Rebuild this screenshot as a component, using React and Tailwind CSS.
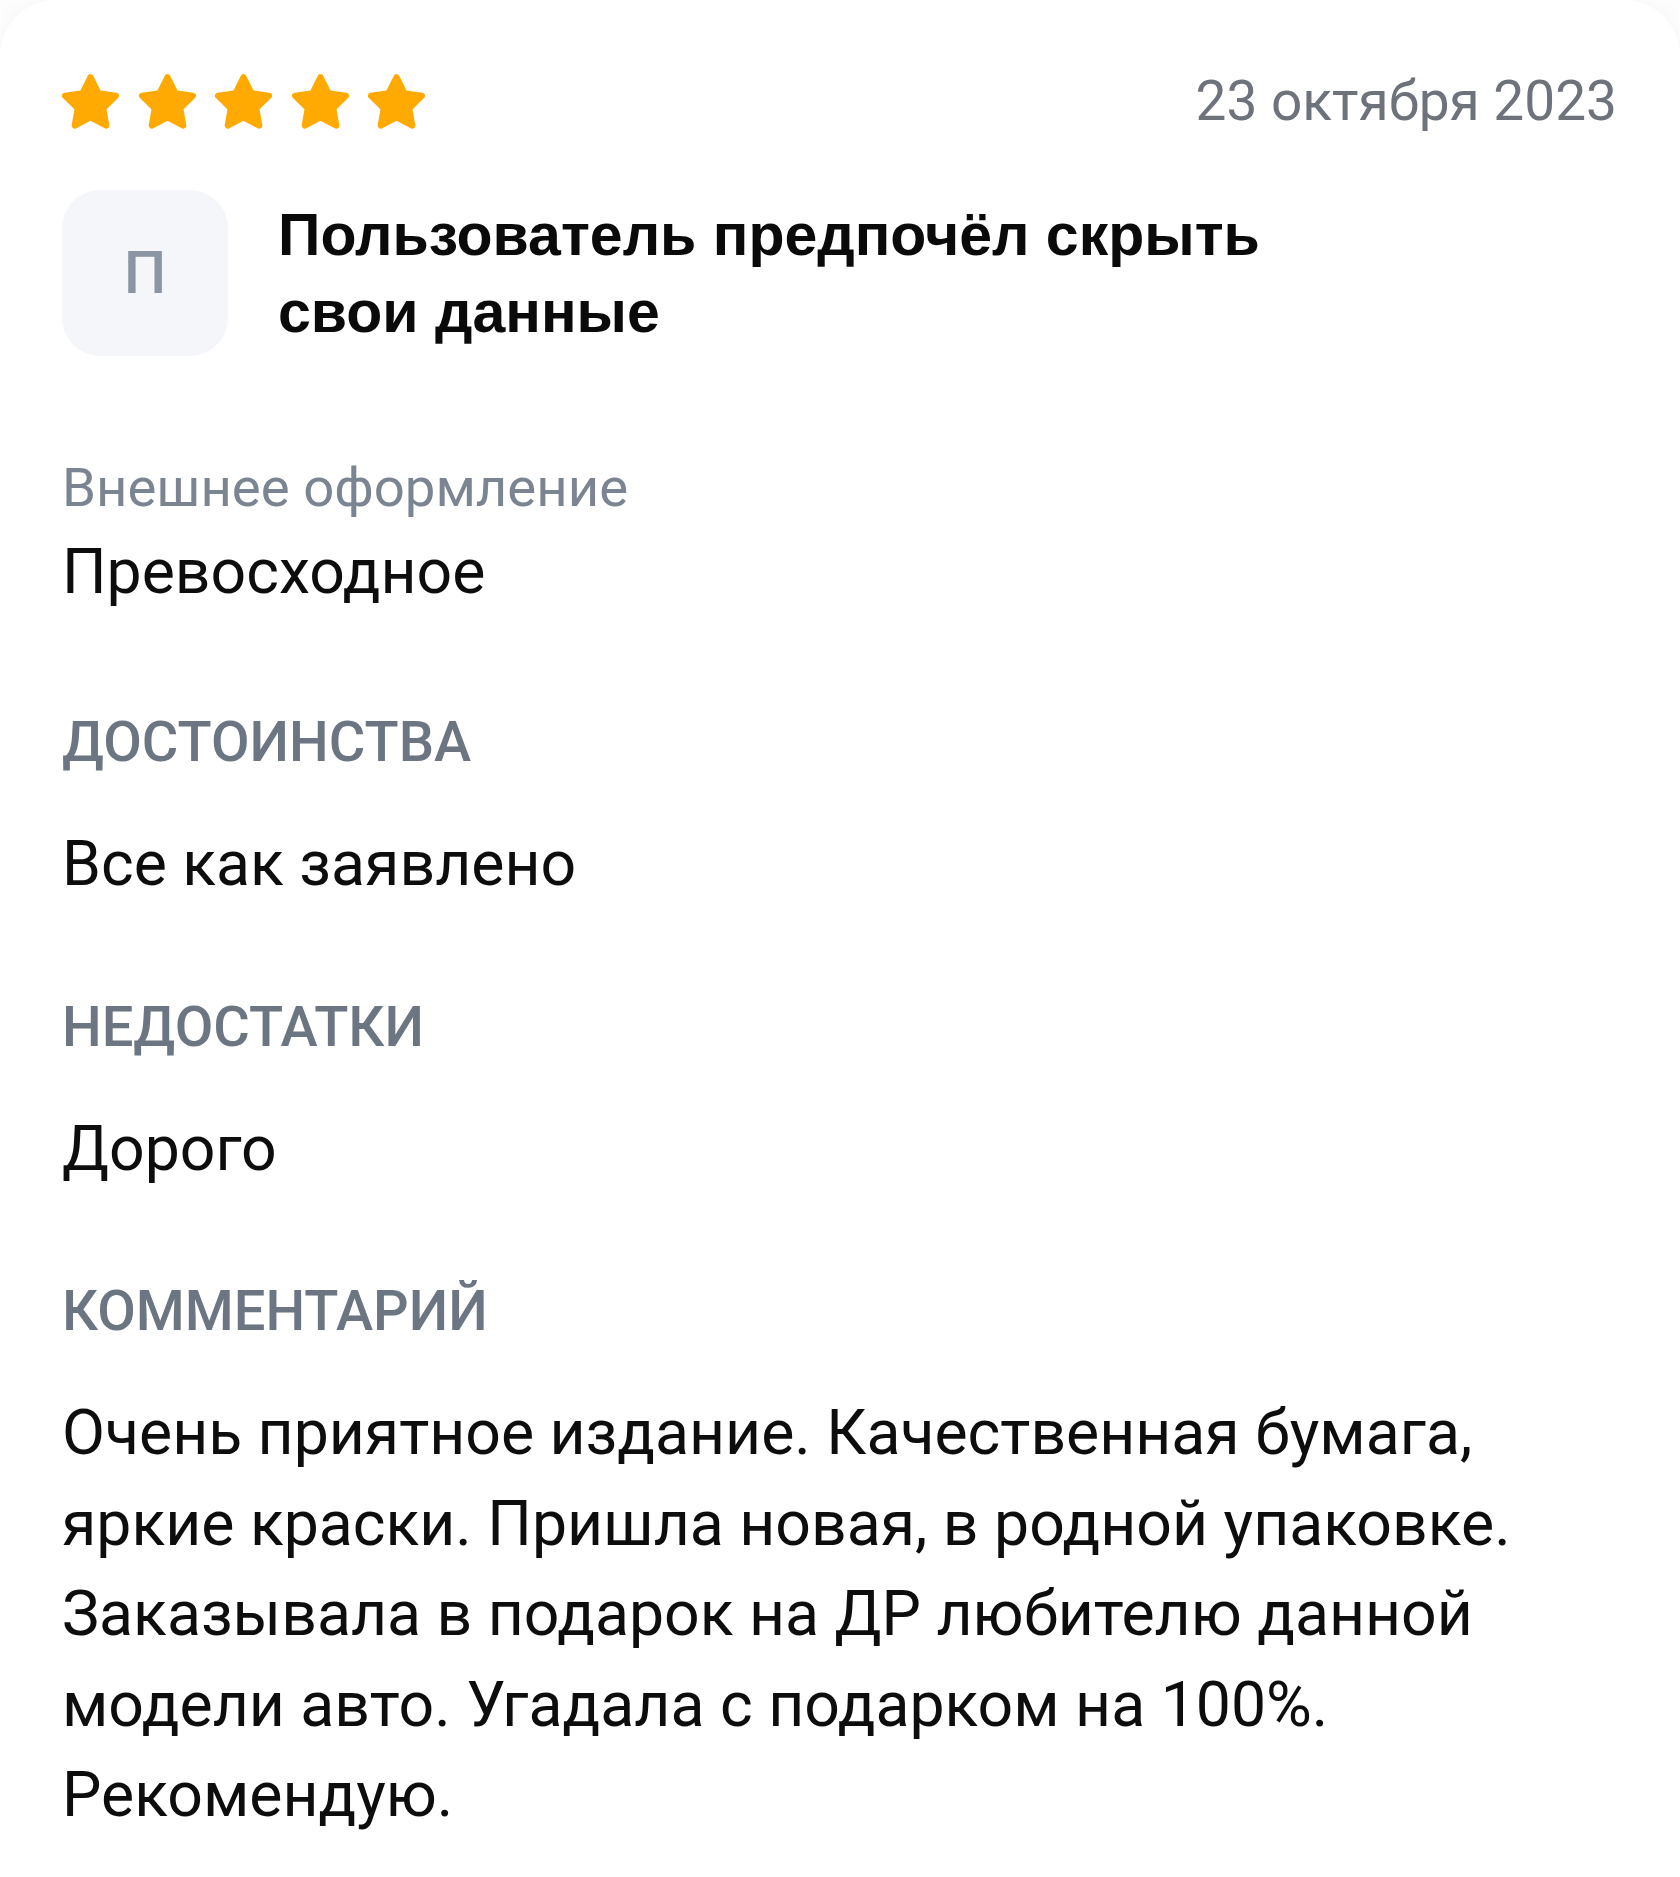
import React from "react";

const STAR_PATH =
  "M12 2.6l2.75 5.6 6.15.9-4.45 4.35 1.05 6.1L12 16.65 6.5 19.55l1.05-6.1L3.1 9.1l6.15-.9z";

function Star() {
  return (
    <svg viewBox="2 1.5 20 19.2" className="w-[57px] h-[55px]">
      <path
        d={STAR_PATH}
        fill="#ffa903"
        stroke="#ffa903"
        strokeWidth="2.2"
        strokeLinejoin="round"
      />
    </svg>
  );
}

function Section({ label, children, first = false, last = false }) {
  return (
    <div className={last ? "flex flex-col" : first ? "flex flex-col mb-[93px]" : "flex flex-col mb-[85px]"}>
      <div
        className={
          first
            ? "text-[54.5px] leading-[60px] text-[#7b8592]"
            : "text-[56px] leading-[64px] font-medium text-[#6b7682] uppercase"
        }
      >
        {label}
      </div>
      <div
        className={
          first
            ? "text-[62.5px] leading-[90px] text-[#0d0d0d] mt-[10px]"
            : "text-[62.5px] leading-[90.5px] text-[#0d0d0d] mt-[45px]"
        }
      >
        {children}
      </div>
    </div>
  );
}

export default function App() {
  return (
    <div
      className="min-h-screen bg-white"
      style={{ fontFamily: "Roboto, 'Liberation Sans', sans-serif" }}
    >
      <div className="rounded-[56px] bg-white shadow-[0_0_40px_rgba(30,40,60,0.05)] pl-[62px] pr-[63px] pt-[71px] pb-[90px]">
        {/* header: rating + date */}
        <div className="flex items-center justify-between">
          <div className="flex gap-[19.5px]">
            <Star />
            <Star />
            <Star />
            <Star />
            <Star />
          </div>
          <div className="text-[55px] leading-[60px] text-[#6e737b]">
            23 октября 2023
          </div>
        </div>

        {/* author */}
        <div className="flex items-start gap-[50px] mt-[59px]">
          <div className="w-[166px] h-[166px] shrink-0 rounded-[38px] bg-[#f4f6f9] flex items-center justify-center">
            <span className="text-[60px] font-medium text-[#8a96a3]">П</span>
          </div>
          <div
            className="max-w-[1060px] text-[59px] leading-[77px] font-bold text-[#0a0a0a] pt-[7px]"
            style={{ fontFamily: "'Liberation Sans', Arial, sans-serif" }}
          >
            Пользователь предпочёл скрыть свои данные
          </div>
        </div>

        {/* details */}
        <div className="flex flex-col mt-[101px]">
          <Section label="Внешнее оформление" first>
            Превосходное
          </Section>
          <Section label="Достоинства">Все как заявлено</Section>
          <Section label="Недостатки">Дорого</Section>
          <Section label="Комментарий" last>
            Очень приятное издание. Качественная бумага, яркие краски. Пришла
            новая, в родной упаковке. Заказывала в подарок на ДР любителю
            данной модели авто. Угадала с подарком на 100%. Рекомендую.
          </Section>
        </div>
      </div>
    </div>
  );
}
